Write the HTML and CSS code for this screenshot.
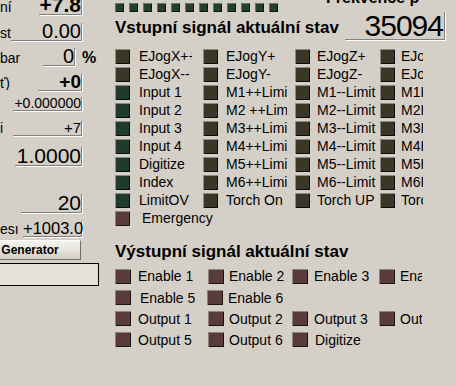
FILE: index.html
```html
<!DOCTYPE html>
<html>
<head>
    <meta charset="UTF-8">
    <title>Stav signálů</title>
    <link rel="stylesheet" href="styles.css">
</head>
<body>
    <div class="left">
        <div class="lrow r1"><span class="lab">ní</span><span class="fld">+7.8</span></div>
        <div class="lrow r2"><span class="lab">st</span><span class="fld">0.00</span></div>
        <div class="lrow r3"><span class="lab">bar</span><span class="fld">0</span><span class="unit">%</span></div>
        <div class="lrow r4"><span class="lab">ť)</span><span class="fld">+0</span></div>
        <div class="lrow r5"><span class="lab"></span><span class="fld">+0.000000</span></div>
        <div class="lrow r6"><span class="lab">i</span><span class="fld">+7</span></div>
        <div class="lrow r7"><span class="lab"></span><span class="fld">1.0000</span></div>
        <div class="lrow r8"><span class="lab"></span><span class="fld">20</span></div>
        <div class="lrow r9"><span class="lab">esı</span><span class="fld">+1003.0</span></div>
        <button class="gen-btn">Generator</button>
        <div class="status-box"></div>
    </div>

    <div class="main">
        <div class="strip-row">
            <div class="strip">
                <i></i><i></i><i></i><i></i><i></i><i></i><i></i><i></i><i></i><i></i><i></i><i></i>
            </div>
            <div class="freq-label">Frekvence p</div>
        </div>

        <div class="head-row">
            <div class="title">Vstupní signál aktuální stav</div>
            <div class="freq-val">35094</div>
        </div>

        <div class="inputs">
            <div class="irow">
                <div class="cell c1"><b class="led o"></b><span>EJogX++</span></div>
                <div class="cell c2"><b class="led o"></b><span>EJogY+</span></div>
                <div class="cell c3"><b class="led o"></b><span>EJogZ+</span></div>
                <div class="cell c4"><b class="led o"></b><span>EJogA+</span></div>
            </div>
            <div class="irow">
                <div class="cell c1"><b class="led o"></b><span>EJogX--</span></div>
                <div class="cell c2"><b class="led o"></b><span>EJogY-</span></div>
                <div class="cell c3"><b class="led o"></b><span>EJogZ-</span></div>
                <div class="cell c4"><b class="led o"></b><span>EJogA-</span></div>
            </div>
            <div class="irow">
                <div class="cell c1"><b class="led g"></b><span>Input 1</span></div>
                <div class="cell c2"><b class="led o"></b><span>M1++Limit</span></div>
                <div class="cell c3"><b class="led o"></b><span>M1--Limit</span></div>
                <div class="cell c4"><b class="led o"></b><span>M1Home</span></div>
            </div>
            <div class="irow">
                <div class="cell c1"><b class="led g"></b><span>Input 2</span></div>
                <div class="cell c2"><b class="led o"></b><span>M2 ++Limit</span></div>
                <div class="cell c3"><b class="led o"></b><span>M2--Limit</span></div>
                <div class="cell c4"><b class="led o"></b><span>M2Home</span></div>
            </div>
            <div class="irow">
                <div class="cell c1"><b class="led g"></b><span>Input 3</span></div>
                <div class="cell c2"><b class="led o"></b><span>M3++Limit</span></div>
                <div class="cell c3"><b class="led o"></b><span>M3--Limit</span></div>
                <div class="cell c4"><b class="led o"></b><span>M3Home</span></div>
            </div>
            <div class="irow">
                <div class="cell c1"><b class="led g"></b><span>Input 4</span></div>
                <div class="cell c2"><b class="led o"></b><span>M4++Limit</span></div>
                <div class="cell c3"><b class="led o"></b><span>M4--Limit</span></div>
                <div class="cell c4"><b class="led o"></b><span>M4Home</span></div>
            </div>
            <div class="irow">
                <div class="cell c1"><b class="led g"></b><span>Digitize</span></div>
                <div class="cell c2"><b class="led o"></b><span>M5++Limit</span></div>
                <div class="cell c3"><b class="led o"></b><span>M5--Limit</span></div>
                <div class="cell c4"><b class="led o"></b><span>M5Home</span></div>
            </div>
            <div class="irow">
                <div class="cell c1"><b class="led g"></b><span>Index</span></div>
                <div class="cell c2"><b class="led o"></b><span>M6++Limit</span></div>
                <div class="cell c3"><b class="led o"></b><span>M6--Limit</span></div>
                <div class="cell c4"><b class="led o"></b><span>M6Home</span></div>
            </div>
            <div class="irow">
                <div class="cell c1"><b class="led g"></b><span>LimitOV</span></div>
                <div class="cell c2"><b class="led o"></b><span>Torch On</span></div>
                <div class="cell c3"><b class="led o"></b><span>Torch UP</span></div>
                <div class="cell c4"><b class="led o"></b><span>Torch Down</span></div>
            </div>
            <div class="irow">
                <div class="cell emergency"><b class="led r"></b><span>Emergency</span></div>
            </div>
        </div>

        <div class="title out-title">Výstupní signál aktuální stav</div>

        <div class="outputs">
            <div class="orow">
                <div class="ocell o1"><b class="led r"></b><span>Enable 1</span></div>
                <div class="ocell o2"><b class="led r"></b><span>Enable 2</span></div>
                <div class="ocell o3"><b class="led r"></b><span>Enable 3</span></div>
                <div class="ocell o4"><b class="led r"></b><span>Enable 4</span></div>
            </div>
            <div class="orow shifted">
                <div class="ocell o1"><b class="led r"></b><span>Enable 5</span></div>
                <div class="ocell o2"><b class="led r"></b><span>Enable 6</span></div>
            </div>
            <div class="orow">
                <div class="ocell o1"><b class="led r"></b><span>Output 1</span></div>
                <div class="ocell o2"><b class="led r"></b><span>Output 2</span></div>
                <div class="ocell o3"><b class="led r"></b><span>Output 3</span></div>
                <div class="ocell o4"><b class="led r"></b><span>Output 4</span></div>
            </div>
            <div class="orow">
                <div class="ocell o1"><b class="led r"></b><span>Output 5</span></div>
                <div class="ocell o2"><b class="led r"></b><span>Output 6</span></div>
                <div class="ocell o3 wide"><b class="led r"></b><span>Digitize</span></div>
            </div>
        </div>
    </div>
</body>
</html>
```

FILE: styles.css
```css
body {
    margin: 0;
    width: 456px;
    height: 386px;
    overflow: hidden;
    display: flex;
    background: #d4d0c8;
    color: #000;
    font-family: "Liberation Sans", Arial, sans-serif;
    font-size: 14px;
}

/* left column with value fields */
.left {
    width: 110px;
    flex: none;
    display: flex;
    flex-direction: column;
}
.lrow {
    display: flex;
    align-items: baseline;
    width: 82px;
}
.lab {
    flex: 1;
    line-height: 14px;
    white-space: nowrap;
    overflow: hidden;
}
.fld {
    box-sizing: border-box;
    text-align: right;
    white-space: nowrap;
    border-bottom: 1px solid #808080;
    border-right: 1px solid #808080;
    box-shadow: 1px 1px 0 #fff;
}
.unit {
    width: 0;
    padding-left: 7px;
    font-weight: bold;
    font-size: 16px;
    line-height: 14px;
    white-space: nowrap;
}
.r1 { margin-top: -4px; }
.r1 .fld { width: 43px; font: bold 21px/18px "Liberation Sans", Arial, sans-serif; }
.r2 { margin-top: 8px; }
.r2 .fld { width: 71px; font: 20px/17px "Liberation Sans", Arial, sans-serif; }
.r3 { margin-top: 7px; }
.r3 .fld { width: 32px; font: 20px/17px "Liberation Sans", Arial, sans-serif; }
.r4 { margin-top: 8px; }
.r4 .fld { width: 44px; font: bold 19px/16px "Liberation Sans", Arial, sans-serif; }
.r5 { margin-top: 6px; }
.r5 .fld { width: 69px; font: 14px/13px "Liberation Sans", Arial, sans-serif; }
.r6 { margin-top: 10px; }
.r6 .fld { width: 69px; font: 15px/14px "Liberation Sans", Arial, sans-serif; }
.r7 { margin-top: 11px; }
.r7 .fld { width: 67px; font: 21px/18px "Liberation Sans", Arial, sans-serif; }
.r8 { margin-top: 28px; }
.r8 .fld { width: 61px; font: 21px/18px "Liberation Sans", Arial, sans-serif; }
.r9 { margin-top: 8px; }
.r9 .fld { width: 59px; font: 16.5px/15px "Liberation Sans", Arial, sans-serif; }

.gen-btn {
    margin: 3px 0 0 -21px;
    width: 102px;
    height: 20px;
    padding: 0;
    font: bold 12px "Liberation Sans", Arial, sans-serif;
    color: #000;
    background: linear-gradient(#f4f3ee, #e2e0d6 60%, #cfccc0);
    border: 1px solid;
    border-color: #fff #6f6d66 #6f6d66 #fff;
}
.status-box {
    margin: 3px 0 0 -1px;
    width: 100px;
    height: 23px;
    box-sizing: border-box;
    border: 1px solid #000;
    background: #e4e2d8;
}

/* signal panel */
.main {
    flex: 1;
    padding-left: 5px;
}
.strip-row {
    display: flex;
    height: 12px;
    padding-top: 3px;
    box-sizing: border-box;
}
.strip {
    display: flex;
    gap: 5px;
}
.strip i {
    width: 9px;
    height: 9px;
    background: #243e2f;
    box-shadow: inset 1px 1px 0 #66736a, inset -1px -1px 0 #111;
}
.freq-label {
    margin: -13px 0 0 48px;
    font-weight: bold;
    font-size: 16px;
    line-height: 16px;
    white-space: nowrap;
}
.head-row {
    display: flex;
}
.title {
    width: 230px;
    margin-top: 8px;
    font-weight: bold;
    font-size: 17px;
    line-height: 16px;
    white-space: nowrap;
}
.freq-val {
    width: 100px;
    height: 28px;
    box-sizing: border-box;
    padding: 1px 1px 0 0;
    font-size: 30px;
    line-height: 26px;
    letter-spacing: -1px;
    text-align: right;
    border-bottom: 1px solid #808080;
    border-right: 1px solid #808080;
    box-shadow: 1px 1px 0 #fff;
}

.led {
    display: block;
    flex: none;
    width: 15px;
    height: 15px;
    box-shadow: inset 1px 1px 0 #8a8a82, inset -1px -1px 0 #0c0c0c;
}
.led.g { background: #203b2b; }
.led.o { background: #3a3727; }
.led.r { background: #5a3b3b; box-shadow: inset 1px 1px 0 #8d8282, inset -1px -1px 0 #1c1414; }

.inputs {
    margin-top: 7px;
}
.irow {
    display: flex;
    align-items: center;
    height: 18px;
}
.cell {
    display: flex;
    align-items: center;
    flex: none;
}
.cell span {
    line-height: 18px;
    white-space: nowrap;
    overflow: hidden;
}
.c1 { width: 88px; }
.c1 span { margin-left: 9px; width: 53px; }
.c2 { width: 92px; }
.c2 span { margin-left: 8px; width: 61px; }
.c3 { width: 85px; }
.c3 span { margin-left: 7px; width: 62px; }
.c4 { width: 43px; }
.c4 span { margin-left: 6px; width: 22px; }
.emergency span { margin-left: 12px; }

.out-title {
    width: auto;
    margin-top: 17px;
}
.outputs {
    margin-top: 5px;
}
.orow {
    display: flex;
    align-items: center;
    height: 21px;
}
.orow:first-child { height: 22px; }
.ocell {
    display: flex;
    align-items: center;
    flex: none;
}
.ocell .led { width: 16px; }
.ocell span {
    line-height: 18px;
    white-space: nowrap;
    overflow: hidden;
}
.o1 { width: 93px; }
.o1 span { margin-left: 7px; }
.o2 { width: 84px; }
.o2 span { margin-left: 5px; }
.o3 { width: 87px; }
.o3 span { margin-left: 6px; }
.o3.wide span { margin-left: 7px; }
.o4 { width: 44px; }
.o4 span { margin-left: 5px; width: 22px; }
.shifted .o1 { width: 92px; }
.shifted .o1 span { margin-left: 9px; }
```
